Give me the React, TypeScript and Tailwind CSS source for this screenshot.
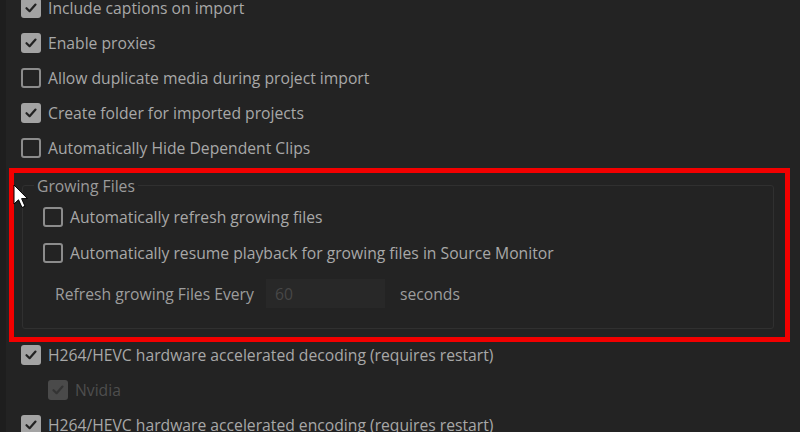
import React from "react";

type Item = { label: string; checked?: boolean; disabled?: boolean; indent?: boolean };

const topItems: Item[] = [
  { label: "Include captions on import", checked: true },
  { label: "Enable proxies", checked: true },
  { label: "Allow duplicate media during project import" },
  { label: "Create folder for imported projects", checked: true },
  { label: "Automatically Hide Dependent Clips" },
];

const bottomItems: Item[] = [
  { label: "H264/HEVC hardware accelerated decoding (requires restart)", checked: true },
  { label: "Nvidia", checked: true, disabled: true, indent: true },
  { label: "H264/HEVC hardware accelerated encoding (requires restart)", checked: true },
];

function Checkbox({ checked, disabled }: { checked?: boolean; disabled?: boolean }) {
  if (checked) {
    return (
      <span
        className={
          "flex h-[20px] w-[20px] shrink-0 items-center justify-center rounded-[3px] " +
          (disabled ? "bg-[#4a4a4a]" : "bg-[#a3a3a3]")
        }
      >
        <svg width="14" height="14" viewBox="0 0 14 14" fill="none">
          <path
            d="M2.5 7.2 L5.6 10.2 L11.5 3.6"
            stroke={disabled ? "#343434" : "#222222"}
            strokeWidth="2.2"
            strokeLinecap="round"
            strokeLinejoin="round"
          />
        </svg>
      </span>
    );
  }
  return (
    <span className="h-[20px] w-[20px] shrink-0 rounded-[3px] border-2 border-[#8c8c8c]" />
  );
}

function Row({ item, className }: { item: Item; className: string }) {
  return (
    <div className={"flex items-center gap-[7px] " + className}>
      <Checkbox checked={item.checked} disabled={item.disabled} />
      <span className={"pt-[2px] " + (item.disabled ? "text-[#4e4e4e]" : "text-[#a8a8a8]")}>
        {item.label}
      </span>
    </div>
  );
}

export default function App() {
  return (
    <div
      className="relative h-[432px] w-[800px] overflow-hidden bg-[#232323] text-[15.7px]"
      style={{ fontFamily: '"Open Sans", "Noto Sans", sans-serif' }}
    >
      <div className="absolute left-0 top-0 h-full w-[6px] bg-[#1e1e1e]" />

      <div className="-mt-[10px] flex flex-col">
        {topItems.map((it) => (
          <Row key={it.label} item={it} className="h-[35px] pl-[21px]" />
        ))}
      </div>

      <fieldset className="ml-[22px] mt-[9px] w-[752px] rounded-[3px] border border-[#303030] pb-[20px]">
        <legend className="ml-[11px] px-[3px] pt-[2px] leading-[20px] text-[#9b9b9b]">Growing Files</legend>
        <div className="flex flex-col pt-[3px]">
          <Row item={{ label: "Automatically refresh growing files" }} className="h-[36px] pl-[20px]" />
          <Row
            item={{ label: "Automatically resume playback for growing files in Source Monitor" }}
            className="h-[36px] pl-[20px]"
          />
          <div className="mt-[8px] flex items-center pl-[32px] text-[#9d9d9d]">
            <span className="w-[211px] pt-[2px]">Refresh growing Files Every</span>
            <div className="flex h-[29px] w-[119px] items-center bg-[#282828] pl-[9px] pt-[2px] text-[#474747]">
              60
            </div>
            <span className="ml-[15px] pt-[2px]">seconds</span>
          </div>
        </div>
      </fieldset>

      <div className="mt-[8px] flex flex-col">
        {bottomItems.map((it) => (
          <Row
            key={it.label}
            item={it}
            className={"h-[35px] " + (it.indent ? "pl-[48px]" : "pl-[21px]")}
          />
        ))}
      </div>

      {/* red annotation box */}
      <div className="pointer-events-none absolute left-[9px] top-[168px] h-[174px] w-[781px] border-[5px] border-[#f20000]" />

      {/* mouse cursor */}
      <svg
        className="pointer-events-none absolute left-[13px] top-[184px]"
        width="16"
        height="26"
        viewBox="0 0 16 26"
      >
        <path
          d="M1 1 L1 20 L5.5 15.8 L9 23.5 L12 22.2 L8.6 14.6 L14.5 14.6 Z"
          fill="#ffffff"
          stroke="#000000"
          strokeWidth="1"
          strokeLinejoin="round"
        />
      </svg>
    </div>
  );
}
